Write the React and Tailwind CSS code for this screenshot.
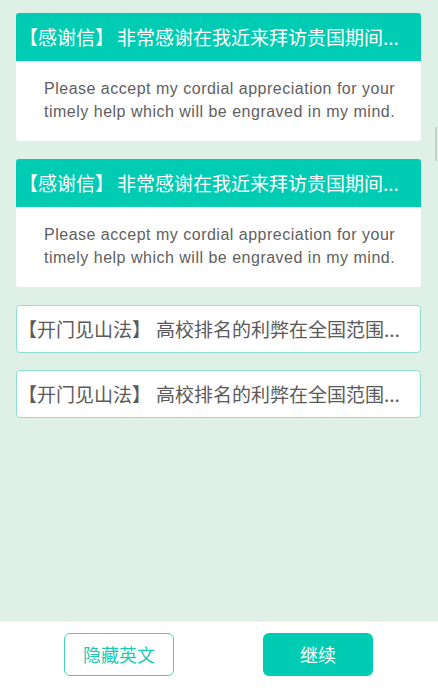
export default function App() {
  const cn = '"Noto Sans CJK SC", "Noto Sans", sans-serif';
  const en = '"Liberation Sans", "Noto Sans CJK SC", sans-serif';
  const Letter = () => (
    <div className="rounded-[3px] overflow-hidden bg-white">
      <div
        className="h-[48px] bg-[#00ccb3] text-white text-[19px] flex items-center pl-[3px] whitespace-nowrap overflow-hidden"
        style={{ fontFamily: cn }}
      >
        <span>【感谢信】</span>
        <span className="ml-[3px]">非常感谢在我近来拜访贵国期间...</span>
      </div>
      <div
        className="h-[80px] pl-[28px] pr-[20px] pt-[16px] text-[16px] leading-[23px] text-[#606060]"
        style={{ fontFamily: en, letterSpacing: "0.5px" }}
      >
        Please accept my cordial appreciation for your timely help which will be engraved in my mind.
      </div>
    </div>
  );
  const Method = () => (
    <div
      className="h-[48px] rounded-[4px] border border-[#8fdfd0] bg-white flex items-center pl-[1px] text-[19px] text-[#5a5a5a] whitespace-nowrap overflow-hidden"
      style={{ fontFamily: cn }}
    >
      <span>【开门见山法】</span>
      <span className="ml-[5px]">高校排名的利弊在全国范围...</span>
    </div>
  );
  return (
    <div className="relative h-[688px] w-[438px] flex flex-col bg-[#dff0e6] overflow-hidden">
      <div className="flex-1 pt-[13px] pl-[16px] pr-[17px] flex flex-col">
        <Letter />
        <div className="h-[18px]" />
        <Letter />
        <div className="h-[18px]" />
        <Method />
        <div className="h-[17px]" />
        <Method />
      </div>
      <div className="absolute right-[1px] top-[127px] w-[2px] h-[34px] bg-[#c8cfcb] rounded-full" />
      <div className="h-[67px] bg-white border-t border-[#eef2f0] flex items-start pt-[11px]">
        <div className="flex w-full" style={{ fontFamily: cn }}>
          <div className="ml-[64px] w-[110px] h-[43px] rounded-[6px] border border-[#3fd3c0] text-[#1cc9b3] text-[18px] flex items-center justify-center">
            隐藏英文
          </div>
          <div className="ml-[89px] w-[110px] h-[43px] rounded-[6px] bg-[#00ccb3] text-white text-[18px] flex items-center justify-center">
            继续
          </div>
        </div>
      </div>
    </div>
  );
}
